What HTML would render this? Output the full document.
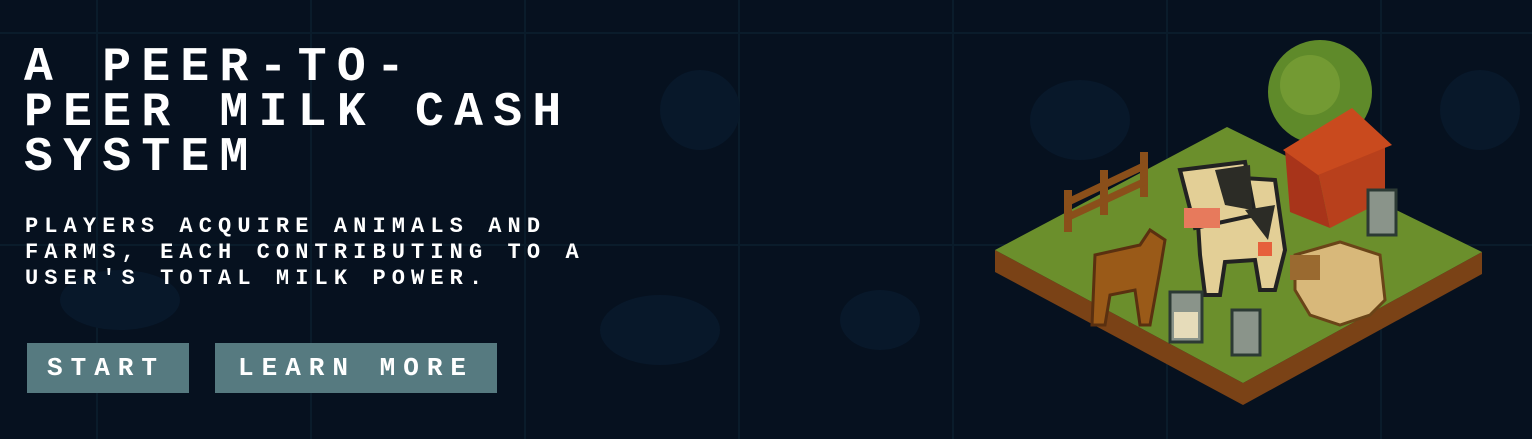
<!DOCTYPE html>
<html><head><meta charset="utf-8"><style>
html,body{margin:0;padding:0}
body{width:1532px;height:439px;overflow:hidden;position:relative;background:#06111f;font-family:"Liberation Mono",monospace;font-weight:bold;color:#fff;
background-image:linear-gradient(#0a1c2b 0 2px,transparent 2px),linear-gradient(90deg,#0a1c2b 0 2px,transparent 2px);
background-size:214px 212px;background-position:96px 32px}
h1{position:absolute;left:24px;top:46px;margin:0;font-size:48px;line-height:45px;letter-spacing:10.3px;font-weight:bold}
p{position:absolute;left:25px;top:214px;margin:0;font-size:22px;line-height:26px;letter-spacing:6.1px}
.b{position:absolute;top:343px;height:50px;background:#567a80;font-size:26px;line-height:50px;letter-spacing:8px;box-sizing:border-box}
svg{position:absolute;left:0;top:0}
</style></head><body>
<svg width="1532" height="439">
<g fill="#08182a">
<ellipse cx="120" cy="300" rx="60" ry="30"/><ellipse cx="700" cy="110" rx="40" ry="40"/><ellipse cx="1080" cy="120" rx="50" ry="40"/><ellipse cx="660" cy="330" rx="60" ry="35"/><ellipse cx="1480" cy="110" rx="40" ry="40"/><ellipse cx="880" cy="320" rx="40" ry="30"/>
</g>
<polygon points="995,250 995,272 1243,405 1482,274 1482,252 1243,383" fill="#7a4216"/>
<polygon points="995,250 1227,127 1482,252 1243,383" fill="#6b8f2c"/>
<circle cx="1320" cy="92" r="52" fill="#5f8a2a"/>
<circle cx="1310" cy="85" r="30" fill="#739a33"/>
<polygon points="1285,150 1318,172 1330,228 1290,212" fill="#a8341a"/>
<polygon points="1318,172 1385,142 1385,200 1330,228" fill="#b8401c"/>
<polygon points="1283,150 1352,108 1392,145 1318,175" fill="#c94a1e"/>
<g fill="#8a4f1a"><rect x="1064" y="190" width="8" height="42"/><rect x="1100" y="170" width="8" height="45"/><rect x="1140" y="152" width="8" height="45"/>
<polygon points="1064,200 1148,160 1148,168 1064,208"/><polygon points="1064,215 1148,176 1148,184 1064,223"/></g>
<path d="M1095,255 L1140,245 L1150,230 L1165,240 L1160,270 L1150,325 L1140,325 L1135,290 L1110,295 L1105,325 L1092,325 Z" fill="#9a5a18" stroke="#5a3010" stroke-width="3"/>
<path d="M1295,255 L1340,242 L1380,255 L1385,300 L1370,315 L1340,325 L1310,315 L1295,290 Z" fill="#d8b87a" stroke="#6a4418" stroke-width="3"/>
<rect x="1290" y="255" width="30" height="25" fill="#9a6a30"/>
<path d="M1195,175 L1275,180 L1285,250 L1275,290 L1260,290 L1255,260 L1225,262 L1220,295 L1205,295 L1200,255 Z" fill="#e3cf96" stroke="#222" stroke-width="4"/>
<path d="M1180,170 L1245,162 L1255,215 L1195,228 Z" fill="#e3cf96" stroke="#222" stroke-width="4"/>
<path d="M1215,170 L1250,165 L1252,210 L1225,205 Z M1245,210 L1275,205 L1268,240 Z" fill="#2c2c26"/>
<rect x="1184" y="208" width="36" height="20" fill="#e77a5c"/>
<rect x="1258" y="242" width="14" height="14" fill="#e6603c"/>
<g fill="#8a948a" stroke="#2c3a34" stroke-width="3"><rect x="1170" y="292" width="32" height="50"/><rect x="1232" y="310" width="28" height="45"/><rect x="1368" y="190" width="28" height="45"/></g>
<rect x="1174" y="312" width="24" height="26" fill="#e6dcba"/>
</svg>
<h1>A PEER-TO-<br>PEER MILK CASH<br>SYSTEM</h1>
<p>PLAYERS ACQUIRE ANIMALS AND<br>FARMS, EACH CONTRIBUTING TO A<br>USER'S TOTAL MILK POWER.</p>
<div class="b" style="left:27px;width:162px;padding-left:20px">START</div>
<div class="b" style="left:215px;width:282px;padding-left:23px">LEARN MORE</div>
</body></html>
